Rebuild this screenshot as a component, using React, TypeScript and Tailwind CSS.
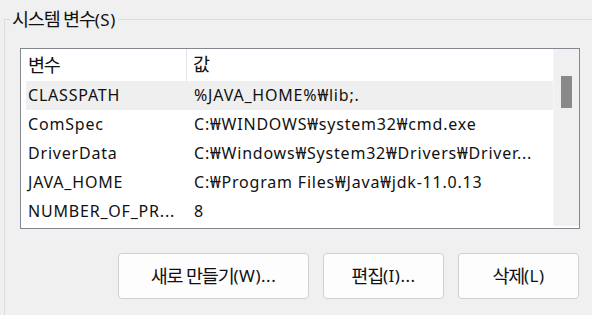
import React from 'react';

const rows = [
  { name: 'CLASSPATH', value: '%JAVA_HOME%₩lib;.' },
  { name: 'ComSpec', value: 'C:₩WINDOWS₩system32₩cmd.exe' },
  { name: 'DriverData', value: 'C:₩Windows₩System32₩Drivers₩Driver...' },
  { name: 'JAVA_HOME', value: 'C:₩Program Files₩Java₩jdk-11.0.13' },
  { name: 'NUMBER_OF_PR...', value: '8' },
];

const font = { fontFamily: '"Noto Sans", "Noto Sans CJK KR", sans-serif' };

// Hangul in the original is drawn larger than the latin text
const K = ({ children }: { children: React.ReactNode }) => (
  <span className="text-[18.5px] tracking-[-1.2px] leading-[22px]">{children}</span>
);

const btn =
  'h-[46px] rounded-[4px] border border-[#d0d0d0] bg-[#fdfdfd] flex items-center justify-center text-[17px] tracking-[0.5px]';

export default function App() {
  return (
    <div
      className="w-[592px] h-[315px] overflow-hidden bg-[#f0f0f0] pt-[8px] text-[16px] tracking-[0.8px] text-[#111]"
      style={font}
    >
      <fieldset className="ml-[4px] w-[620px] h-[330px] border-l border-t border-[#dcdcdc]">
        <legend className="ml-[5px] px-[2px] leading-[22px] text-[17px] tracking-[0.5px]">
          <K>시스템 변수</K>(S)
        </legend>

        <div className="ml-[15px] mt-[17px] flex w-[560px] h-[181px] border border-[#828790] bg-white">
          <div className="flex-1 pl-[5px]">
            <div className="flex h-[32px] items-center">
              <div className="w-[161px] h-full flex items-center pl-[2px] border-r border-[#e5e5e5]">
                <K>변수</K>
              </div>
              <div className="pl-[6px]">
                <K>값</K>
              </div>
            </div>
            {rows.map((r, i) => (
              <div
                key={r.name}
                className={`flex h-[29px] pb-[2px] items-center whitespace-nowrap ${i === 0 ? 'bg-[#efefef]' : ''}`}
              >
                <div className="w-[161px] pl-[2px]">{r.name}</div>
                <div className="pl-[7px]">{r.value}</div>
              </div>
            ))}
          </div>
          <div className="w-[26px] h-[177px] bg-[#f0f0f0] border-l border-[#f7f7f7] pt-[27px] pl-[7px]">
            <div className="w-[11px] h-[32px] bg-[#898989]" />
          </div>
        </div>

        <div className="ml-[113px] mt-[24px] flex gap-[14px]">
          <button className={`${btn} w-[191px]`}>
            <K>새로 만들기</K>(W)...
          </button>
          <button className={`${btn} w-[121px]`}>
            <K>편집</K>(I)...
          </button>
          <button className={`${btn} w-[121px]`}>
            <K>삭제</K>(L)
          </button>
        </div>
      </fieldset>
    </div>
  );
}
